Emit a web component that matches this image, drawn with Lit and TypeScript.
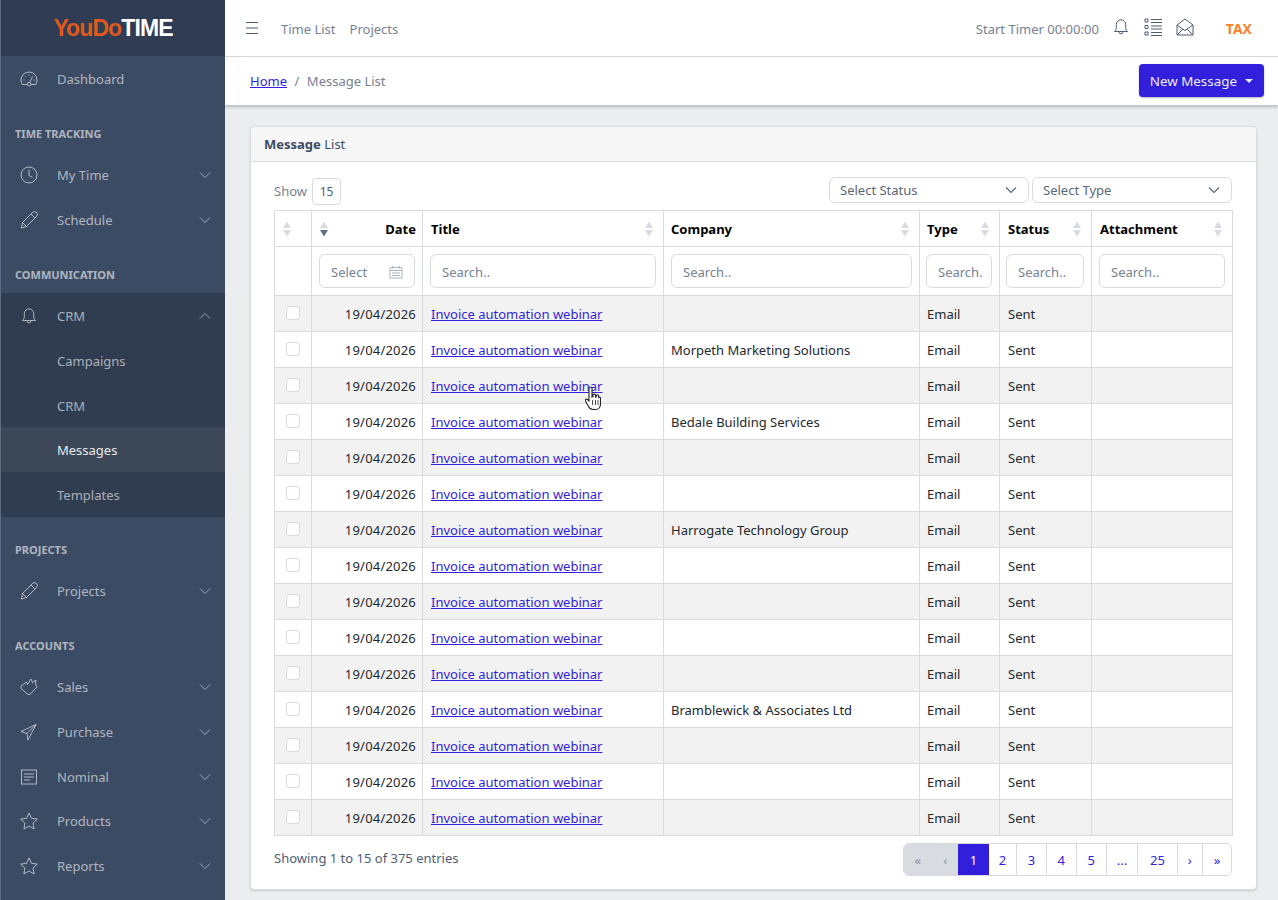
import { LitElement, html, css, svg, nothing } from 'lit';
import { customElement } from 'lit/decorators.js';

const ICONS: Record<string, unknown> = {
  gauge: svg`<path d="M3.300 15.500A8 8 0 0 1 2 11a8 8 0 0 1 16 0 8 8 0 0 1-1.300 4.500H12M3.300 15.500H8"/><circle cx="10" cy="15.200" r="1.800"/><path d="M10.800 13.500L13.500 7.500M4.500 11h1M6 7l.7.7M10 5.500v1M14.500 11h1"/>`,
  clock: svg`<circle cx="10" cy="10" r="8"/><path d="M10 4.500V10.500l3.500 2"/>`,
  pencil: svg`<path d="M2.500 18l1-5.500L13.500 2.500a2.100 2.100 0 0 1 4 4L7.500 16.500z"/><path d="M3.500 12.500l4 4M12 4l4 4"/>`,
  bell: svg`<path d="M3.500 14.500c1.200-1 1.800-2 1.800-4V7.500a4.700 4.700 0 0 1 9.400 0v3c0 2 .6 3 1.800 4z"/><path d="M8 14.800a2 2 0 0 0 4 0"/>`,
  hand: svg`<path d="M2 9l5.500-4 1 2.500L12 2l1.500 3.500L17 3l-.5 4 1.500 3-7 7.500H9L2 11.500z" stroke-linejoin="round"/>`,
  send: svg`<path d="M17 2.500L2 9.500l6 2 1 6.500z"/><path d="M17 2.500L8 11.500"/>`,
  note: svg`<rect x="2.500" y="3" width="15" height="14"/><path d="M5 7h10M5 10h10M5 13h6"/>`,
  star: svg`<path d="M10 2l2.500 5.300 5.800.8-4.200 4 1 5.800-5.100-2.800-5.100 2.800 1-5.800-4.200-4 5.800-.8z"/>`,
};

const icon = (name: string) => html`<svg class="ico" viewBox="0 0 20 20">${ICONS[name]}</svg>`;
const chev = (up = false) => html`<svg class="chev" viewBox="0 0 12 12"><path d=${up ? 'M1 8.500L6 3.500l5 5' : 'M1 3.500l5 5 5-5'}/></svg>`;

type Nav = { title?: string; label?: string; ico?: string; more?: boolean };

@customElement('side-bar')
export class SideBar extends LitElement {
  static styles = css`
    :host {
      background: #3c4b64;
      border-left: 1px solid #5f6b80;
      box-sizing: border-box;
      color: rgba(255, 255, 255, 0.6);
      display: block;
      font-family: 'Noto Sans', sans-serif;
      font-size: 13px;
      height: 900px;
      overflow: hidden;
    }
    .brand {
      align-items: center;
      background: #303c54;
      display: flex;
      font-family: 'Liberation Sans', sans-serif;
      font-size: 23px;
      font-weight: 700;
      height: 56px;
      justify-content: center;
      letter-spacing: -0.900px;
    }
    .brand b { color: #df5a1b; }
    .brand span { color: #fff; }
    .title {
      box-sizing: border-box;
      font-size: 11px;
      font-weight: 700;
      height: 51.200px;
      line-height: 20px;
      padding: 23.500px 14px 0;
    }
    .item {
      align-items: center;
      box-sizing: border-box;
      display: flex;
      height: 44.800px;
      padding: 1.500px 14px 0 18px;
    }
    .ico {
      fill: none;
      flex: none;
      height: 20px;
      margin-right: 18px;
      stroke: rgba(255, 255, 255, 0.6);
      stroke-width: 1;
      width: 20px;
    }
    .label { flex: 1; }
    .chev {
      fill: none;
      height: 12px;
      stroke: rgba(255, 255, 255, 0.5);
      stroke-width: 1;
      width: 12px;
    }
    .group { background: #303c50; }
    .sub { padding-left: 56px; }
    .sub.on { background: #3c4758; color: #e8eaee; }
  `;

  private _top: Nav[] = [
    { label: 'Dashboard', ico: 'gauge' },
    { title: 'TIME TRACKING' },
    { label: 'My Time', ico: 'clock', more: true },
    { label: 'Schedule', ico: 'pencil', more: true },
    { title: 'COMMUNICATION' },
  ];
  private _rest: Nav[] = [
    { title: 'PROJECTS' },
    { label: 'Projects', ico: 'pencil', more: true },
    { title: 'ACCOUNTS' },
    { label: 'Sales', ico: 'hand', more: true },
    { label: 'Purchase', ico: 'send', more: true },
    { label: 'Nominal', ico: 'note', more: true },
    { label: 'Products', ico: 'star', more: true },
    { label: 'Reports', ico: 'star', more: true },
  ];

  private _row(n: Nav) {
    if (n.title) return html`<div class="title">${n.title}</div>`;
    return html`<div class="item">
      ${icon(n.ico!)}<span class="label">${n.label}</span>${n.more ? chev() : nothing}
    </div>`;
  }

  render() {
    return html`
      <div class="brand"><b>YouDo</b><span>TIME</span></div>
      ${this._top.map(n => this._row(n))}
      <div class="group">
        <div class="item">${icon('bell')}<span class="label">CRM</span>${chev(true)}</div>
        <div class="item sub">Campaigns</div>
        <div class="item sub">CRM</div>
        <div class="item sub on">Messages</div>
        <div class="item sub">Templates</div>
      </div>
      ${this._rest.map(n => this._row(n))}
    `;
  }
}

const sortIcon = (active = false) => html`<svg class="sort" viewBox="0 0 10 16">
  <path d="M5 .5l4 6.500H1z" fill="#d8dbe0"/>
  <path d="M1 9h8l-4 6.500z" fill=${active ? '#636f83' : '#d8dbe0'}/>
</svg>`;

const COMPANIES: Record<number, string> = {
  1: 'Morpeth Marketing Solutions',
  3: 'Bedale Building Services',
  6: 'Harrogate Technology Group',
  11: 'Bramblewick & Associates Ltd',
};

@customElement('app-root')
export class AppRoot extends LitElement {
  static styles = css`
    :host {
      background: #ebedef;
      color: #3c4b64;
      display: grid;
      font-family: 'Noto Sans', sans-serif;
      font-size: 13px;
      grid-template-columns: 225px 1fr;
      height: 900px;
      overflow: hidden;
      position: relative;
    }
    .main { min-width: 0; }
    .topbar {
      align-items: center;
      background: #fff;
      border-bottom: 1px solid #d8dbe0;
      color: #768192;
      display: flex;
      height: 56px;
      padding: 0 26px 0 20px;
    }
    .toptext { padding-top: 1px; }
    .burger { height: 14px; margin-right: 22px; width: 14px; stroke: #4f5d73; fill: none; }
    .toplink { margin-right: 14px; padding-top: 1px; }
    .spacer { flex: 1; }
    .topico { fill: none; height: 20px; margin-bottom: 2px; margin-left: 12px; stroke: #4f5d73; stroke-width: 1; width: 20px; }
    .tax { color: #f9822b; font-size: 14px; font-weight: 700; margin-left: 31px; padding-top: 1px; }
    .crumbs {
      align-items: center;
      background: #fff;
      box-shadow: 0 2px 3px rgba(60, 75, 100, 0.3);
      color: #768192;
      display: flex;
      height: 48px;
      padding: 0 14px 0 25px;
      position: relative;
    }
    a { color: #321fdb; text-decoration: underline; }
    .sep { margin: 0 7.500px; }
    .newbtn {
      align-items: center;
      background: #321fdb;
      border-radius: 4px;
      box-shadow: 0 1px 2px rgba(60, 75, 100, 0.4);
      color: #ebedef;
      display: flex;
      font-size: 13.400px;
      gap: 8px;
      height: 33px;
      margin-top: -1px;
      padding: 0 11px;
    }
    .caret { border-left: 4px solid transparent; border-right: 4px solid transparent; border-top: 4px solid #ebedef; }
    .card {
      background: #fff;
      border: 1px solid #d8dbe0;
      border-radius: 4px;
      box-shadow: 0 1px 2px rgba(60, 75, 100, 0.2);
      margin: 21px 21px 0 25px;
    }
    .card-head {
      background: #f7f7f7;
      border-bottom: 1px solid #d8dbe0;
      border-radius: 4px 4px 0 0;
      box-sizing: border-box;
      height: 35px;
      line-height: 35px;
      padding: 0 13px;
    }
    .card-head b { font-weight: 700; }
    .card-body { padding: 15px 24px 13px 23px; }
    .tools { align-items: center; display: flex; height: 28px; margin-bottom: 5px; color: #768192; }
    .len {
      align-items: center;
      border: 1px solid #d8dbe0;
      border-radius: 4px;
      box-sizing: border-box;
      color: #4f5d73;
      display: flex;
      font-size: 12px;
      height: 27px;
      justify-content: center;
      margin-left: 5px;
      width: 29px;
    }
    .select {
      align-items: center;
      border: 1px solid #d8dbe0;
      border-radius: 6px;
      box-sizing: border-box;
      color: #5c6873;
      display: flex;
      height: 26px;
      justify-content: space-between;
      margin-left: 3px;
      margin-top: -2px;
      padding: 0 11px 0 10px;
      width: 200px;
    }
    .select svg { fill: none; height: 12px; stroke: #5c6873; stroke-width: 1.200; width: 12px; }
    table { border-collapse: collapse; table-layout: fixed; width: 958px; color: #23282c; }
    th, td { border: 1px solid #d8dbe0; box-sizing: border-box; }
    th.head { height: 36px; padding: 0 7px; text-align: left; font-weight: 700; color: #000; }
    th.head.date { padding-right: 6px; }
    th.head:nth-child(3), th.head:nth-child(6), th.head:nth-child(7),
    .data td:nth-child(3), .data td:nth-child(6) { padding-left: 8px; }
    .cell { align-items: center; display: flex; gap: 4px; justify-content: space-between; }
    .sort { flex: none; height: 16px; width: 10px; }
    .cell span + .sort { margin-right: 2px; }
    .filter td { height: 49px; padding: 0 7px; }
    .input {
      align-items: center;
      border: 1px solid #d8dbe0;
      border-radius: 6px;
      box-sizing: border-box;
      color: #768192;
      display: flex;
      height: 34px;
      justify-content: space-between;
      padding: 1px 11px 0;
      white-space: nowrap;
    }
    .input span { overflow: hidden; }
    .input svg { fill: none; flex: none; height: 14px; stroke: #aab2bd; width: 14px; }
    .nudge .input { margin-left: -1px; }
    .narrow .input { padding-right: 9px; }
    .data td { height: 36px; padding: 0 7px; }
    .data:nth-child(odd) td { background: #f2f2f2; }
    .data td.right { letter-spacing: 0.2px; padding-right: 6px; text-align: right; }
    .box {
      background: #fff;
      border: 1px solid #d8dbe0;
      border-radius: 3px;
      box-sizing: border-box;
      height: 14px;
      margin: -2px 0 0 4px;
      width: 14px;
    }
    .foot { align-items: center; display: flex; justify-content: space-between; margin-top: 7px; color: #4f5d73; }
    .foot > span { margin-bottom: 4px; }
    .pager {
      border: 1px solid #d8dbe0;
      border-radius: 6px;
      display: flex;
      height: 33px;
      box-sizing: border-box;
      overflow: hidden;
    }
    .pg {
      align-items: center;
      border-left: 1px solid #d8dbe0;
      color: #321fdb;
      display: flex;
      justify-content: center;
      font-size: 13px;
      padding: 0 10.700px;
    }
    .pg.off { background: #d8dbe0; border: 0; color: #8a93a2; padding: 0 11px; }
    .pg.on { background: #321fdb; border: 0; color: #fff; padding: 0 11.500px; }
    .pg.on + .pg { border-left: 0; padding: 0 10px; }
    .pg:nth-child(8), .pg:nth-child(10) { padding: 0 10.200px; }
    .pg:nth-child(9) { padding: 0 11.700px; }
    .pointer { height: 26px; left: 585px; position: absolute; top: 386px; width: 16px; }
  `;

  render() {
    const rows = Array.from({ length: 15 }, (_, i) => i);
    return html`
      <side-bar></side-bar>
      <div class="main">
        <div class="topbar">
          <svg class="burger" viewBox="0 0 14 14"><path d="M1 1.500h12M1 7h12M1 12.500h12"/></svg>
          <span class="toplink">Time List</span>
          <span class="toplink">Projects</span>
          <span class="spacer"></span>
          <span class="toptext">Start Timer 00:00:00</span>
          <svg class="topico" viewBox="0 0 20 20">${ICONS.bell}</svg>
          <svg class="topico" viewBox="0 0 20 20">
            <path d="M2 2h3v3H2zM2 8.500h3v3H2zM2 15h3v3H2zM8 2.500h11M8 5.500h11M8 9h11M8 12h11M8 15.500h11M8 18.500h11"/>
          </svg>
          <svg class="topico" viewBox="0 0 20 20">
            <path d="M2 8l8-6 8 6v10H2zM2 8l8 5.500L18 8M2 18l6-6M18 18l-6-6"/>
          </svg>
          <span class="tax">TAX</span>
        </div>
        <div class="crumbs">
          <a href="#">Home</a><span class="sep">/</span><span>Message List</span>
          <span class="spacer"></span>
          <div class="newbtn">New Message <span class="caret"></span></div>
        </div>
        <div class="card">
          <div class="card-head"><b>Message</b> List</div>
          <div class="card-body">
            <div class="tools">
              <span>Show</span><span class="len">15</span>
              <span class="spacer"></span>
              <div class="select">Select Status<svg viewBox="0 0 12 12"><path d="M1 3.500l5 5 5-5"/></svg></div>
              <div class="select">Select Type<svg viewBox="0 0 12 12"><path d="M1 3.500l5 5 5-5"/></svg></div>
            </div>
            <table>
              <colgroup>
                <col style="width:37px"><col style="width:111px"><col style="width:241px"><col style="width:256px">
                <col style="width:80px"><col style="width:92px"><col style="width:141px">
              </colgroup>
              <thead>
                <tr>
                  <th class="head"><div class="cell">${sortIcon()}</div></th>
                  <th class="head date"><div class="cell">${sortIcon(true)}<span>Date</span></div></th>
                  ${['Title', 'Company', 'Type', 'Status', 'Attachment'].map(t => html`
                    <th class="head"><div class="cell"><span>${t}</span>${sortIcon()}</div></th>`)}
                </tr>
              </thead>
              <tbody>
                <tr class="filter">
                  <td></td>
                  <td><div class="input"><span>Select</span>
                    <svg viewBox="0 0 14 14"><path d="M1 2.500h12v10.500H1zM1 5.500h12M3.500 1v2.500M10.500 1v2.500M3 8h8M3 10.500h8"/></svg>
                  </div></td>
                  <td><div class="input"><span>Search..</span></div></td>
                  <td><div class="input"><span>Search..</span></div></td>
                  <td class="nudge narrow"><div class="input"><span>Search..</span></div></td>
                  <td class="nudge"><div class="input"><span>Search..</span></div></td>
                  <td><div class="input"><span>Search..</span></div></td>
                </tr>
              </tbody>
              <tbody>
                ${rows.map(i => html`
                  <tr class="data">
                    <td><div class="box"></div></td>
                    <td class="right">19/04/2026</td>
                    <td><a href="#">Invoice automation webinar</a></td>
                    <td>${COMPANIES[i] ?? ''}</td>
                    <td>Email</td>
                    <td>Sent</td>
                    <td></td>
                  </tr>`)}
              </tbody>
            </table>
            <div class="foot">
              <span>Showing 1 to 15 of 375 entries</span>
              <div class="pager">
                <span class="pg off">«</span><span class="pg off">‹</span>
                <span class="pg on">1</span>
                ${['2', '3', '4', '5', '...', '25', '›', '»'].map(p => html`<span class="pg">${p}</span>`)}
              </div>
            </div>
          </div>
        </div>
      </div>
      <svg class="pointer" viewBox="0 0 16 26">
        <path d="M4 2.500a1.500 1.500 0 0 1 3 0V11l1-.5V9a1.300 1.300 0 0 1 2.500 0v2l.8-.2V10a1.200 1.200 0 0 1 2.400 0v1.500a1.100 1.100 0 0 1 1.800.5v6c0 3-2 5.500-5 5.500H8c-2 0-3.500-1-4.500-3L.5 15c-.6-1.500 1-2.500 2-1.500L4 15z"
          fill="#fff" stroke="#222" stroke-width="1.100"/>
        <path d="M7.500 14v5M10.500 14v5M13 14v5" stroke="#222" stroke-width=".8"/>
      </svg>
    `;
  }
}
